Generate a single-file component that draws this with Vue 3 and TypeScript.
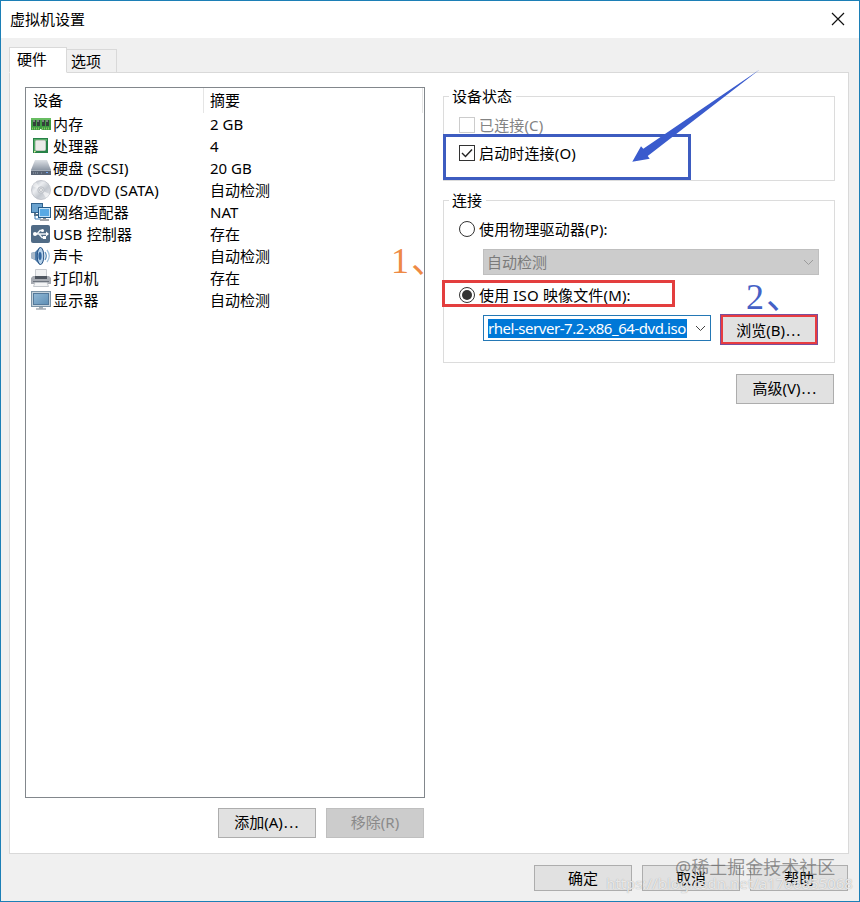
<script setup lang="ts">
import { ref } from 'vue'

interface Device {
  icon: string
  name: string
  summary: string
}

const devices: Device[] = [
  { icon: 'memory', name: '内存', summary: '2 GB' },
  { icon: 'cpu', name: '处理器', summary: '4' },
  { icon: 'disk', name: '硬盘 (SCSI)', summary: '20 GB' },
  { icon: 'cd', name: 'CD/DVD (SATA)', summary: '自动检测' },
  { icon: 'network', name: '网络适配器', summary: 'NAT' },
  { icon: 'usb', name: 'USB 控制器', summary: '存在' },
  { icon: 'sound', name: '声卡', summary: '自动检测' },
  { icon: 'printer', name: '打印机', summary: '存在' },
  { icon: 'display', name: '显示器', summary: '自动检测' },
]

const connectAtPowerOn = ref(true)
const source = ref<'physical' | 'iso'>('iso')
</script>

<template>
  <div class="window">
    <header class="titlebar">
      <span class="title">虚拟机设置</span>
      <svg class="close" width="14" height="14" viewBox="0 0 14 14">
        <path d="M1 1 L13 13 M13 1 L1 13" stroke="#111" stroke-width="1.2" fill="none" />
      </svg>
    </header>

    <nav class="tabs">
      <div class="tab active">硬件</div>
      <div class="tab">选项</div>
    </nav>

    <main class="page">
      <section class="left">
        <div class="list">
          <div class="head">
            <div class="col-name">设备</div>
            <div class="col-sum">摘要</div>
          </div>
          <div v-for="d in devices" :key="d.name" class="row">
            <svg class="icon" width="20" height="20" viewBox="0 0 20 20">
              <defs>
                <linearGradient id="steel" x1="0" y1="0" x2="0" y2="1">
                  <stop offset="0" stop-color="#dde1e6" /><stop offset="1" stop-color="#8d97a5" />
                </linearGradient>
                <linearGradient id="screen" x1="0" y1="0" x2="1" y2="1">
                  <stop offset="0" stop-color="#90b8d6" /><stop offset="1" stop-color="#5f8fb5" />
                </linearGradient>
                <linearGradient id="disc" x1="0" y1="0" x2="1" y2="1">
                  <stop offset="0" stop-color="#a9afb9" /><stop offset=".35" stop-color="#eceef1" />
                  <stop offset=".6" stop-color="#c3c8cf" /><stop offset="1" stop-color="#eceef0" />
                </linearGradient>
              </defs>
              <g v-if="d.icon === 'memory'">
                <path d="M0 4H20V16H10.500V15H9V16H0Z" fill="#3f9c43" />
                <path d="M0 4H20V6H0Z" fill="#68bd62" />
                <path d="M2 6H5V12H2ZM6 6H9V12H6ZM11 6H14V12H11ZM15 6H18V12H15Z" fill="#33413a" />
                <path d="M2 6H4V8H2ZM6 6H8V8H6ZM11 6H13V8H11ZM15 6H17V8H15Z" fill="#77857b" />
                <path d="M1 14.500H9M11 14.500H19" stroke="#8cc465" stroke-width="2" stroke-dasharray="1 1" />
              </g>
              <g v-else-if="d.icon === 'cpu'">
                <rect x="2" y="2" width="15" height="15" fill="#278247" />
                <path d="M3 3H16V5H5V16H3Z" fill="#58ad69" />
                <rect x="4.500" y="4.500" width="10" height="10" rx="1" fill="#ebebe8" stroke="#c2c9bf" />
                <path d="M3 17V15H5" fill="#e3ed9b" />
              </g>
              <g v-else-if="d.icon === 'disk'">
                <path d="M4 2H16L20 12H0Z" fill="url(#steel)" />
                <path d="M0 12H20V17H0Z" fill="#596474" />
                <path d="M0 12.500H20" stroke="#a4adb8" />
                <path d="M2 15H7M10 15H12" stroke="#9aa5b5" stroke-dasharray="1 1" />
                <rect x="15" y="14" width="2" height="1" fill="#73a6f1" />
              </g>
              <g v-else-if="d.icon === 'cd'">
                <circle cx="10" cy="10" r="9.500" fill="url(#disc)" stroke="#b9bdc4" stroke-width=".8" />
                <path d="M10 10L1.500 6A9 9 0 0 1 5 2Z" fill="#fff" opacity=".45" />
                <path d="M10 10L18.500 14A9 9 0 0 1 15 18Z" fill="#fff" opacity=".6" />
                <circle cx="10" cy="10" r="3.200" fill="#dcdfe3" stroke="#b5b9bf" stroke-width=".8" />
                <circle cx="10" cy="10" r="1.400" fill="#fff" stroke="#989da5" stroke-width=".6" />
              </g>
              <g v-else-if="d.icon === 'network'">
                <rect x=".5" y="1.500" width="11" height="9" fill="#6ba3cf" stroke="#31638e" />
                <path d="M4 11V13H7" stroke="#57758d" stroke-width="2" fill="none" />
                <path d="M4 14V17H10" stroke="#3478b4" fill="none" />
                <rect x="7.500" y="5.500" width="12" height="10" fill="#c4e2f7" stroke="#245b89" />
                <path d="M9 7H18V14H9Z" fill="#58a9e4" />
                <path d="M13.500 16V18" stroke="#888" stroke-width="3" />
                <path d="M9 18H18" stroke="#a4a8ad" stroke-width="2" />
              </g>
              <g v-else-if="d.icon === 'usb'">
                <rect x="0" y="1" width="19" height="18" rx="2" fill="#506b86" />
                <path d="M3 10H16M6 10L9 6.500H11M8 10L11 13.500H13" stroke="#eef4f8" stroke-width="1.300" fill="none" />
                <circle cx="4" cy="10" r="2" fill="#fff" />
                <circle cx="11.500" cy="6.500" r="1.500" fill="#fff" />
                <path d="M15 7.500L18 10L15 12.500ZM12 12H15V15H12Z" fill="#fff" />
              </g>
              <g v-else-if="d.icon === 'sound'">
                <path d="M0 7L4 6L9 1C13 4 13 15 9 19L4 14L0 12Z" fill="#4f7dab" />
                <path d="M0 7L4 6V14L0 12Z" fill="#a7b8c9" />
                <ellipse cx="9.500" cy="10" rx="3.300" ry="8.500" fill="#b3d0e9" stroke="#204d81" />
                <ellipse cx="9" cy="10" rx="1.600" ry="4" fill="#31669f" />
                <path d="M14 6Q16.500 10 14 14" stroke="#5c91bd" stroke-width="1.300" fill="none" />
                <path d="M16 4Q20.500 10 16 16" stroke="#a3c4df" stroke-width="1.300" fill="none" />
              </g>
              <g v-else-if="d.icon === 'printer'">
                <path d="M4.500 1.500H15.500V9H4.500Z" fill="#f0f1f2" stroke="#c9ccd0" />
                <path d="M2 8H18L20 10V16H0V10Z" fill="#a7abb2" />
                <path d="M4 8H16V11H4Z" fill="#4e555f" />
                <path d="M2 13.500H18" stroke="#6d747e" />
                <path d="M4 14.500H16L17.500 18.500H2.500Z" fill="#f3f4f5" stroke="#c3c7cc" />
              </g>
              <g v-else>
                <rect x=".5" y="1.500" width="19" height="15" fill="#c4d2dc" stroke="#7b93a6" />
                <rect x="2.500" y="3.500" width="15" height="11" fill="url(#screen)" stroke="#54799a" />
                <path d="M8 17H12V19H8Z" fill="#a3adb5" />
                <path d="M5 19H15" stroke="#a4adb4" stroke-width="1.500" />
              </g>
            </svg>
            <div class="name">{{ d.name }}</div>
            <div class="sum">{{ d.summary }}</div>
          </div>
        </div>
        <div class="actions">
          <button class="btn tall">添加(A)<span class="dots">...</span></button>
          <button class="btn tall off">移除(R)</button>
        </div>
      </section>

      <section class="right">
        <div class="group state">
          <div class="legend">设备状态</div>
          <div class="option dim"><span class="check"></span>已连接(C)</div>
          <div class="option" @click="connectAtPowerOn = !connectAtPowerOn">
            <span class="check">
              <svg v-if="connectAtPowerOn" width="14" height="14" viewBox="0 0 14 14">
                <path d="M2 7L5.500 10.500L12 3.500" fill="none" stroke="#222" stroke-width="1.400" />
              </svg>
            </span>启动时连接(O)
          </div>
        </div>

        <div class="group conn">
          <div class="legend">连接</div>
          <div class="option" @click="source = 'physical'">
            <span class="radio"><i v-if="source === 'physical'"></i></span>使用物理驱动器(P):
          </div>
          <div class="select off">
            <span>自动检测</span>
            <svg width="11" height="7" viewBox="0 0 11 7"><path d="M1 1L5.500 5.500L10 1" fill="none" stroke="#9b9b9b" /></svg>
          </div>
          <div class="option" @click="source = 'iso'">
            <span class="radio"><i v-if="source === 'iso'"></i></span><span class="iso">使用 ISO 映像文件(M):</span>
          </div>
          <div class="file">
            <div class="select focus">
              <span class="picked">rhel-server-7.2-x86_64-dvd.iso</span>
              <svg width="11" height="7" viewBox="0 0 11 7"><path d="M1 1L5.500 5.500L10 1" fill="none" stroke="#444" /></svg>
            </div>
            <button class="btn browse">浏览(B)<span class="dots">...</span></button>
          </div>
        </div>
        <button class="btn tall advanced">高级(V)<span class="dots">...</span></button>
      </section>
    </main>

    <footer class="footer">
      <button class="btn">确定</button>
      <button class="btn">取消</button>
      <button class="btn">帮助</button>
    </footer>

    <div class="mark box-blue"></div>
    <div class="mark box-red"></div>
    <svg class="mark arrow" width="140" height="100" viewBox="0 0 140 100">
      <path d="M140 -.7L27.700 86L29.700 88.700L12.300 91.700L21 76.300L23.300 78.700Z" fill="#3a5bcd" />
    </svg>
    <div class="mark num one">1、</div>
    <div class="mark num two">2、</div>
    <div class="mark url">https://blog.csdn.net/a1766855068</div>
    <div class="mark community">@稀土掘金技术社区</div>
  </div>
</template>

<style>
body {
  margin: 0;
}
</style>

<style scoped>
* {
  box-sizing: border-box;
}
.window {
  position: relative;
  display: flex;
  flex-direction: column;
  width: 860px;
  height: 902px;
  overflow: hidden;
  border: 1px solid #1c7fb6;
  background: #f0f0f0;
  color: #000;
  font: 15px/20px "Noto Sans", "Noto Sans CJK SC", sans-serif;
  white-space: nowrap;
}
.titlebar {
  display: flex;
  flex: none;
  align-items: center;
  justify-content: space-between;
  height: 37px;
  padding: 0 14px 0 9px;
  background: #fff;
}
.title {
  margin-top: -2px;
}
.close {
  margin-top: -1px;
}
.tabs {
  z-index: 1;
  display: flex;
  flex: none;
  align-items: flex-end;
  height: 35px;
  margin-bottom: -1px;
  padding: 0 0 0 8px;
}
.tab {
  width: 50px;
  height: 24px;
  padding: 1px 0 0 4px;
  border: 1px solid #d9d9d9;
  border-left: 0;
}
.tab.active {
  width: 58px;
  height: 26px;
  padding: 1px 0 0 7px;
  border-left: 1px solid #d9d9d9;
  border-bottom-color: #fff;
  background: #fff;
}
.page {
  display: flex;
  flex: none;
  gap: 18px;
  width: 840px;
  height: 782px;
  margin-left: 8px;
  padding: 14px 0 0 15px;
  border: 1px solid #d9d9d9;
  background: #fff;
}
.left {
  width: 400px;
}
.list {
  height: 711px;
  border: 1px solid #82878c;
}
.head {
  display: flex;
  height: 25px;
  padding-top: 2px;
  padding-left: 7px;
}
.col-name {
  width: 170px;
}
.col-sum {
  flex: 1;
  margin: -2px 1px 0 0;
  padding: 2px 0 0 6px;
  border: 1px solid #e5e5e5;
  border-width: 0 1px;
}
.row {
  display: flex;
  align-items: center;
  height: 22px;
  padding-left: 5px;
}
.icon {
  flex: none;
}
.name {
  width: 157px;
  padding-left: 2px;
  letter-spacing: 0.2px;
}
.sum {
  padding-left: 2px;
}
.actions {
  display: flex;
  justify-content: flex-end;
  gap: 10px;
  margin: 10px 1px 0 0;
}
.btn {
  width: 98px;
  height: 26px;
  padding: 0;
  border: 1px solid #adadad;
  background: #e1e1e1;
  color: #000;
  font: inherit;
}
.btn.tall {
  height: 30px;
  padding-bottom: 2px;
}
.dots {
  margin-left: 1px;
  letter-spacing: 1.3px;
}
.btn.off {
  border-color: #bfbfbf;
  background: #ccc;
  color: #8a8a8a;
}
.right {
  display: flex;
  flex-direction: column;
  width: 392px;
  padding-top: 9px;
}
.group {
  display: flex;
  flex-direction: column;
  border: 1px solid #dcdcdc;
  padding-left: 15px;
}
.state {
  height: 85px;
}
.conn {
  height: 163px;
  margin-top: 19px;
}
.legend {
  align-self: flex-start;
  height: 20px;
  margin: -11px 0 9px -10px;
  padding: 0 4px 0 3px;
  background: #fff;
}
.option {
  display: flex;
  align-items: center;
  height: 20px;
  flex: none;
  letter-spacing: 0.15px;
}
.state .option + .option {
  margin-top: 8px;
}
.dim {
  color: #838383;
}
.check,
.radio {
  display: flex;
  align-items: center;
  justify-content: center;
  width: 16px;
  height: 16px;
  margin-right: 4px;
  border: 1px solid #333;
}
.dim .check {
  border-color: #ccc;
}
.radio {
  border-radius: 50%;
}
.radio i {
  width: 10px;
  height: 10px;
  border-radius: 50%;
  background: #333;
}
.select {
  display: flex;
  align-items: center;
  justify-content: space-between;
  width: 336px;
  height: 26px;
  flex: none;
  margin: 10px 0 10px 24px;
  padding: 0 4px 0 3px;
  border: 1px solid #bfbfbf;
}
.select.off {
  background: #ccc;
  color: #7b7b7b;
}
.file {
  display: flex;
  gap: 9px;
  margin: 10px 0 0 24px;
}
.select.focus {
  width: 228px;
  margin: 0;
  padding-left: 4px;
  border-color: #2478b5;
}
.picked {
  width: 199px;
  height: 19px;
  overflow: hidden;
  background: #0078d7;
  color: #fff;
  line-height: 18px;
  letter-spacing: -0.46px;
}
.browse {
  height: 31px;
  margin-top: -1px;
  border: 3px solid #e83c40;
  outline: 1px solid #7b4f9c;
  outline-offset: -1px;
}
.advanced {
  align-self: flex-end;
  margin: 11px 1px 0 0;
}
.footer {
  display: flex;
  justify-content: flex-end;
  gap: 10px;
  padding: 11px 11px 0 0;
}
.mark {
  position: absolute;
  pointer-events: none;
}
.box-blue {
  top: 133px;
  left: 442px;
  width: 248px;
  height: 46px;
  border: 3px solid #3d5cc0;
}
.box-red {
  top: 279px;
  left: 441px;
  width: 233px;
  height: 27px;
  border: 3px solid #e33e3e;
}
.arrow {
  top: 69px;
  left: 619px;
}
.num {
  font: 36px/40px "Liberation Serif", "Noto Sans CJK SC", serif;
  letter-spacing: 2px;
}
.one {
  top: 240px;
  left: 390px;
  color: #ee8a45;
}
.two {
  top: 276px;
  left: 745px;
  color: #4561c6;
}
.url {
  top: 872px;
  left: 605px;
  color: rgba(255, 255, 255, 0.75);
  text-shadow: 0 0 1px #999;
}
.community {
  top: 854px;
  left: 674px;
  color: rgba(95, 95, 95, 0.65);
  font-size: 18px;
  line-height: 24px;
}
</style>
